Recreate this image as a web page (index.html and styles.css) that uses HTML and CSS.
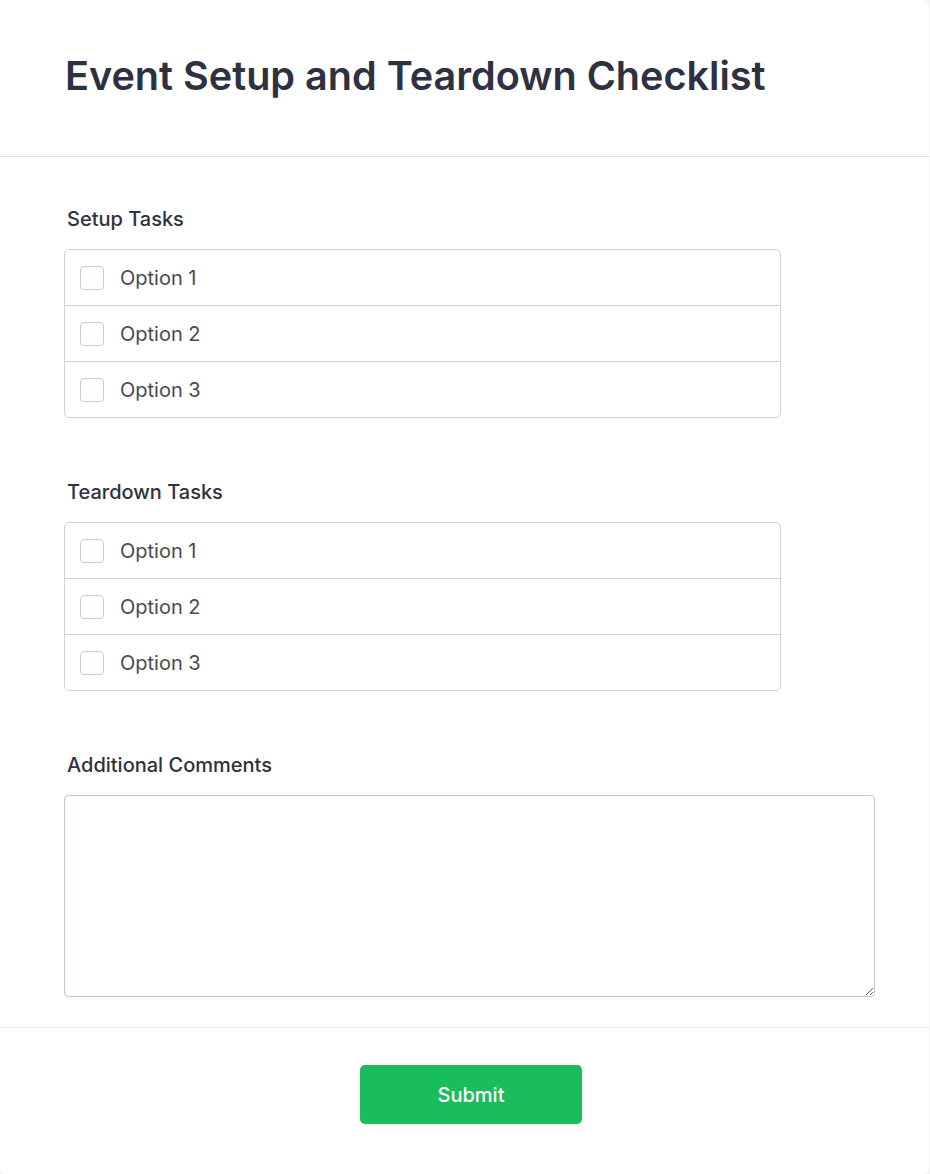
FILE: index.html
```html
<!DOCTYPE html>
<html lang="en">
<head>
<meta charset="utf-8">
<title>Event Setup and Teardown Checklist</title>
<link rel="stylesheet" href="styles.css">
</head>
<body>
<div class="card">
  <header class="card-header">
    <h1 class="title">Event Setup and Teardown Checklist</h1>
  </header>
  <form class="card-body">
    <section class="field">
      <div class="label">Setup Tasks</div>
      <div class="group">
        <label class="option"><span class="box"></span><span>Option 1</span></label>
        <label class="option"><span class="box"></span><span>Option 2</span></label>
        <label class="option"><span class="box"></span><span>Option 3</span></label>
      </div>
    </section>
    <section class="field">
      <div class="label">Teardown Tasks</div>
      <div class="group">
        <label class="option"><span class="box"></span><span>Option 1</span></label>
        <label class="option"><span class="box"></span><span>Option 2</span></label>
        <label class="option"><span class="box"></span><span>Option 3</span></label>
      </div>
    </section>
    <section class="field">
      <div class="label">Additional Comments</div>
      <textarea class="comments"></textarea>
    </section>
  </form>
  <footer class="card-footer">
    <button class="submit" type="button">Submit</button>
  </footer>
</div>
</body>
</html>
```
FILE: styles.css
```css
html, body {
  margin: 0;
  padding: 0;
}
body {
  background: #f4f4f7;
  font-family: Inter, "Noto Sans", sans-serif;
}
.card {
  width: 929px;
  min-height: 1173px;
  background: #ffffff;
  border-radius: 0 6px 6px 6px;
  box-sizing: border-box;
  display: flex;
  flex-direction: column;
}
.card-header {
  height: 157px;
  box-sizing: border-box;
  border-bottom: 1px solid #e2e2e6;
  padding: 52px 64px 0 65px;
}
.title {
  margin: 0;
  font-size: 39.6px;
  line-height: 48px;
  font-weight: 600;
  color: #2d3142;
}
.card-body {
  padding: 50px 55px 30px 64px;
  display: flex;
  flex-direction: column;
  gap: 62px;
}
.field {
  display: flex;
  flex-direction: column;
}
.label {
  font-size: 20px;
  line-height: 24px;
  font-weight: 500;
  color: #2d3142;
  padding-left: 3px;
  margin-bottom: 18px;
}
.group {
  width: 717px;
  box-sizing: border-box;
  border: 1px solid #d2d3d9;
  border-radius: 5px;
}
.option {
  display: flex;
  align-items: center;
  height: 55px;
  padding-left: 15px;
  gap: 16px;
  font-size: 20px;
  color: #4a4a52;
  border-top: 1px solid #d2d3d9;
}
.option:first-child {
  border-top: none;
}
.box {
  width: 24px;
  height: 24px;
  box-sizing: border-box;
  border: 1px solid #c9cbd8;
  border-radius: 4px;
  background: #fff;
}
.comments {
  display: block;
  width: 811px;
  height: 202px;
  box-sizing: border-box;
  border: 1px solid #c4c4d2;
  border-radius: 4px;
  resize: vertical;
  font-family: inherit;
  font-size: 16px;
  margin: 0;
}
.card-footer {
  border-top: 1px solid #ececf0;
  padding: 37px 0 50px 13px;
  display: flex;
  justify-content: center;
}
.submit {
  width: 222px;
  height: 59px;
  border: none;
  border-radius: 5px;
  background: #1abd5c;
  color: #ffffff;
  font-family: inherit;
  font-size: 20px;
  font-weight: 500;
}
```
